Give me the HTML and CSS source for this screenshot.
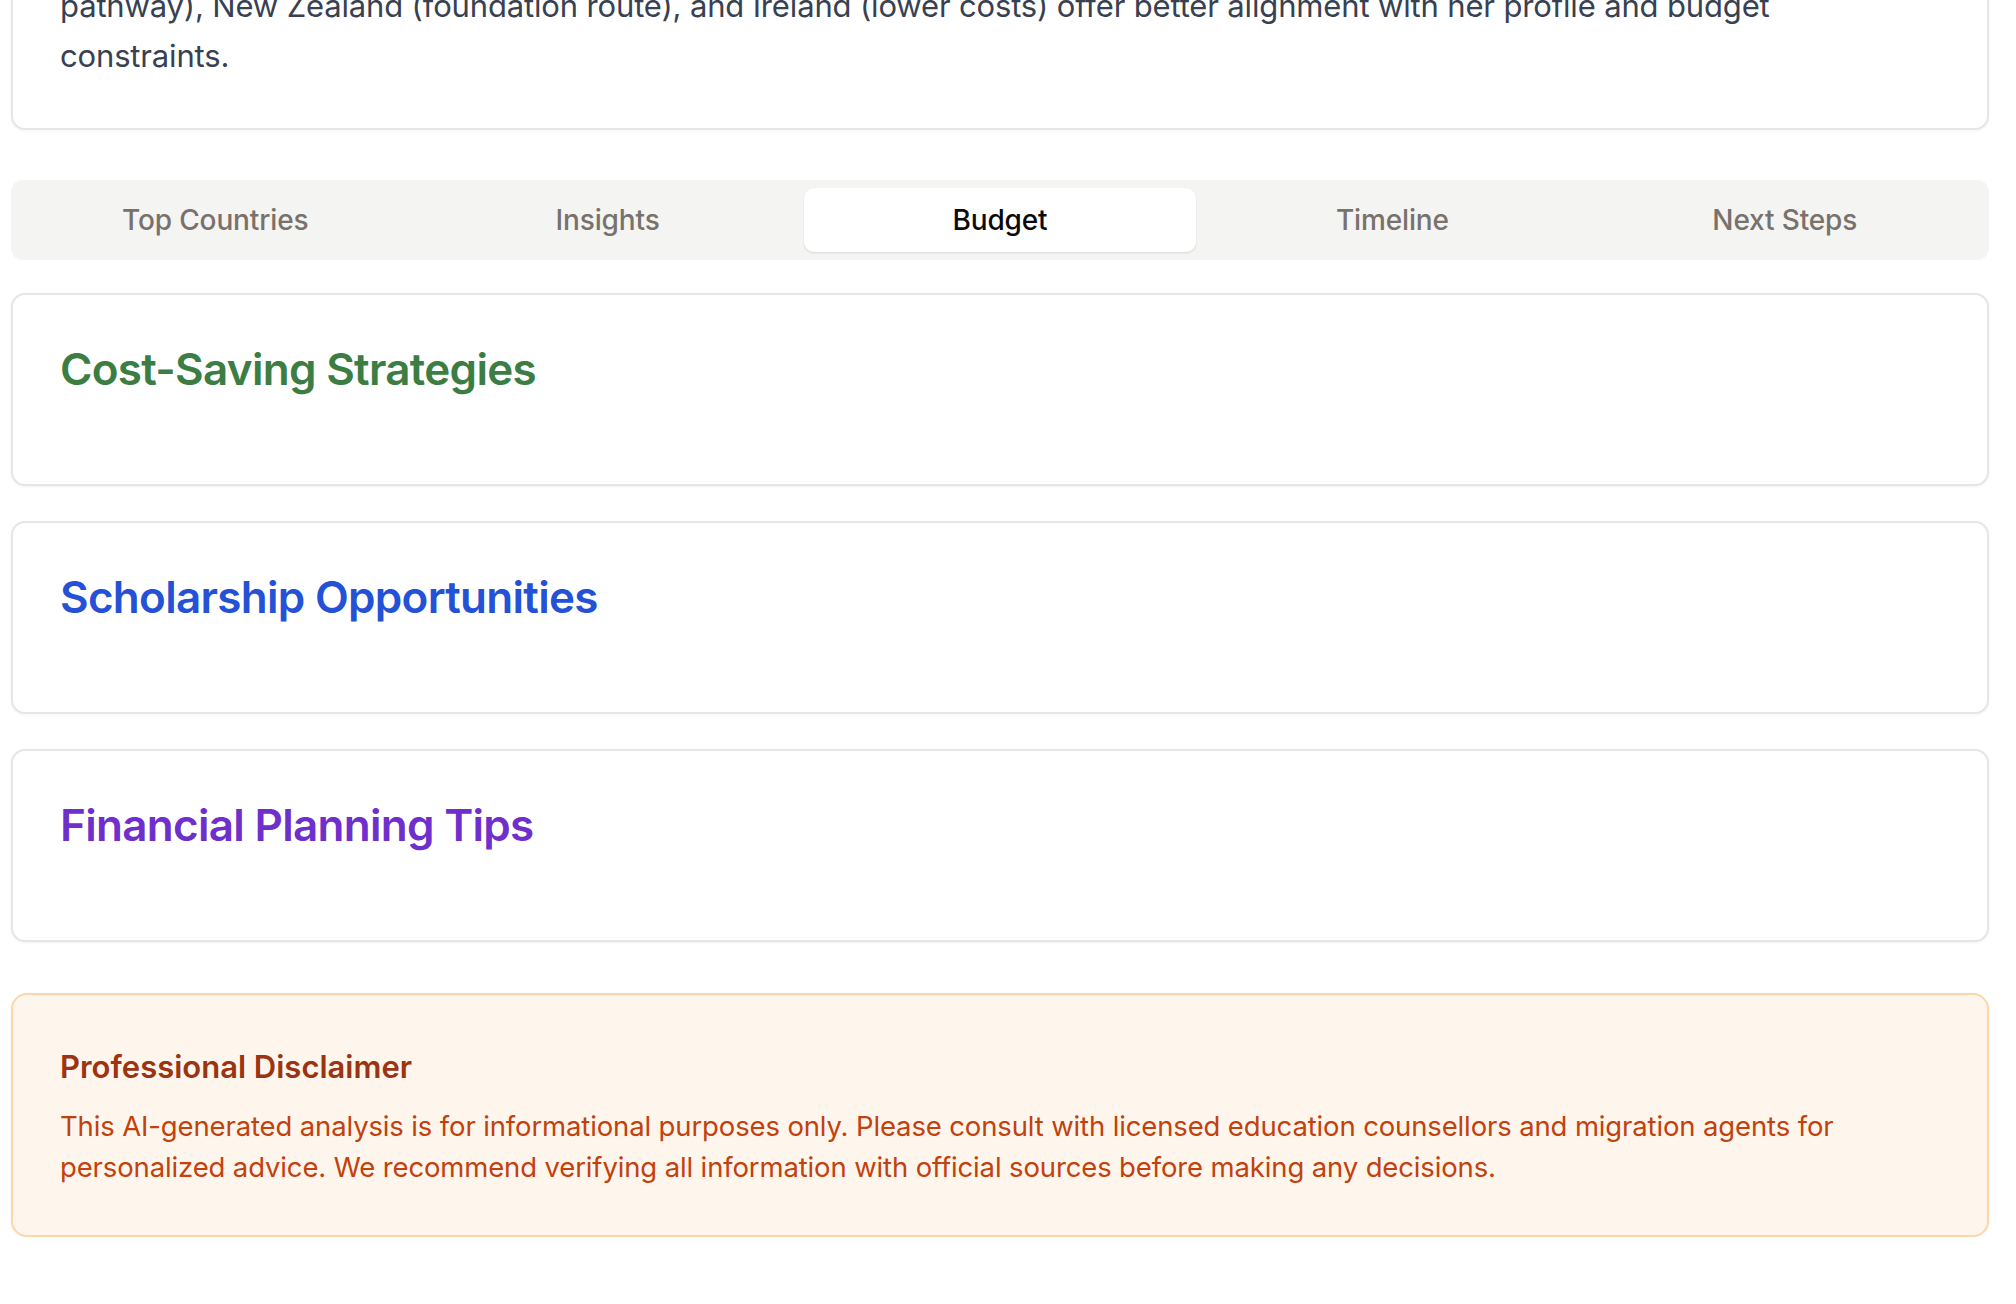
FILE: index.html
```html
<!DOCTYPE html>
<html lang="en">
<head>
<meta charset="utf-8">
<title>Budget</title>
<link rel="stylesheet" href="styles.css">
</head>
<body>
<main class="page">
  <section class="card summary">
    <p class="summary-text">pathway), New Zealand (foundation route), and Ireland (lower costs) offer better alignment with her profile and budget constraints.</p>
  </section>

  <nav class="tabs">
    <button class="tab">Top Countries</button>
    <button class="tab">Insights</button>
    <button class="tab active">Budget</button>
    <button class="tab">Timeline</button>
    <button class="tab">Next Steps</button>
  </nav>

  <section class="card section-card">
    <h2 class="card-title green">Cost-Saving Strategies</h2>
  </section>
  <section class="card section-card">
    <h2 class="card-title blue">Scholarship Opportunities</h2>
  </section>
  <section class="card section-card">
    <h2 class="card-title purple">Financial Planning Tips</h2>
  </section>

  <section class="disclaimer">
    <h3 class="disclaimer-title">Professional Disclaimer</h3>
    <p class="disclaimer-text">This AI-generated analysis is for informational purposes only. Please consult with licensed education counsellors and migration agents for personalized advice. We recommend verifying all information with official sources before making any decisions.</p>
  </section>
</main>
</body>
</html>
```

FILE: styles.css
```css
* { box-sizing: border-box; }
html, body { margin: 0; padding: 0; background: #ffffff; }
body {
  font-family: Inter, "Noto Sans", "Liberation Sans", sans-serif;
  color: #111827;
  overflow: hidden;
}
.page {
  width: 1978px;
  margin-left: 11px;
  margin-top: -81px;
  display: flex;
  flex-direction: column;
}
.card {
  background: #fff;
  border: 2px solid #e6e6e6;
  border-radius: 14px;
  box-shadow: 0 1px 3px rgba(0,0,0,0.05);
}
.summary {
  padding: 60px 80px 47px 47px;
}
.summary-text {
  margin: 0;
  font-size: 31px;
  line-height: 50px;
  color: #374151;
  letter-spacing: -0.005em;
}
.tabs {
  margin-top: 50px;
  height: 80px;
  background: #f4f4f3;
  border-radius: 12px;
  padding: 8px;
  display: grid;
  grid-template-columns: repeat(5, 1fr);
}
.tab {
  border: 0;
  background: transparent;
  font-family: inherit;
  font-size: 28px;
  font-weight: 500;
  color: #78716c;
  border-radius: 10px;
  cursor: pointer;
  letter-spacing: -0.005em;
}
.tab.active {
  background: #fff;
  color: #0c0a09;
  box-shadow: 0 1px 3px rgba(0,0,0,0.08), 0 1px 2px rgba(0,0,0,0.04);
}
.section-card {
  margin-top: 33px;
  height: 193px;
  padding: 48px 47px 0;
}
.section-card + .section-card { margin-top: 35px; }
.card-title {
  margin: 0;
  font-size: 44px;
  line-height: 52px;
  font-weight: 600;
  letter-spacing: -0.016em;
}
.green { color: #3b7d43; }
.blue { color: #2451d6; }
.purple { color: #6f2fcc; }
.disclaimer {
  margin-top: 51px;
  background: #fef6ec;
  border: 2px solid #fbd7a8;
  border-radius: 16px;
  padding: 52px 47px 47px;
  box-shadow: 0 1px 3px rgba(0,0,0,0.04);
}
.disclaimer-title {
  margin: 0;
  font-size: 31px;
  line-height: 40px;
  font-weight: 600;
  color: #9a3412;
  letter-spacing: 0;
}
.disclaimer-text {
  margin: 19px 0 0;
  font-size: 27.5px;
  line-height: 41px;
  color: #c2410c;
  letter-spacing: -0.005em;
}
```
